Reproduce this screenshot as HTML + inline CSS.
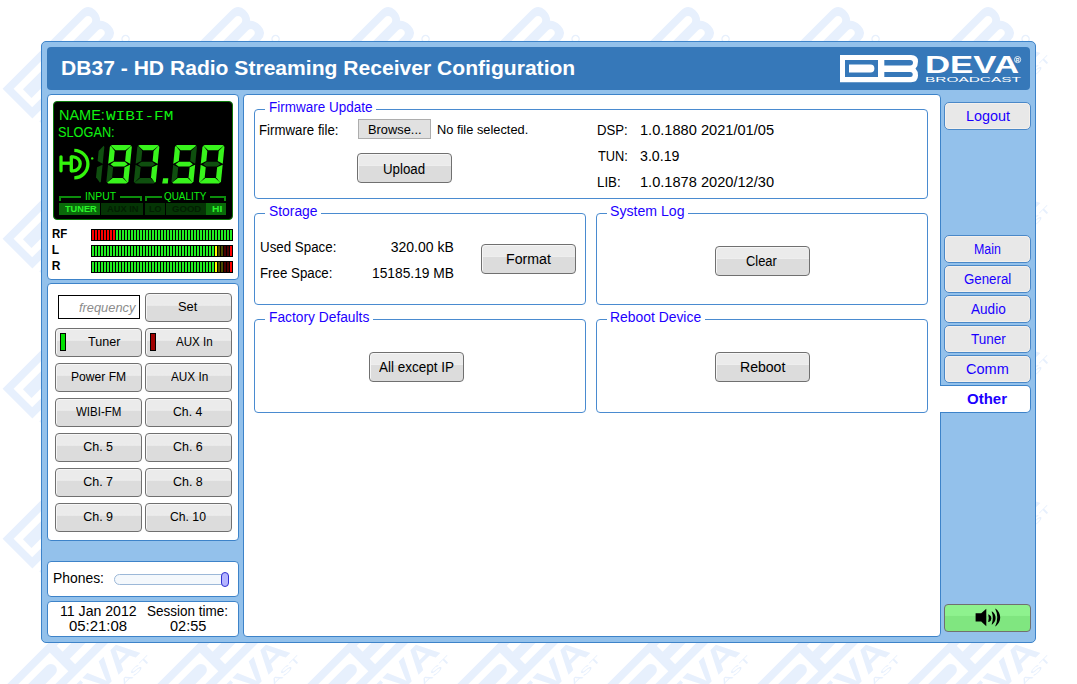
<!DOCTYPE html>
<html><head><meta charset="utf-8"><style>
html,body{margin:0;padding:0;width:1077px;height:684px;overflow:hidden;background:#fff;}
.b{position:absolute;box-sizing:border-box;}
.t{position:absolute;white-space:nowrap;}
.ov{position:absolute;left:0;top:0;}
.outer{background:#93c1eb;border:1px solid #3d83c9;border-radius:5px;}
.hdr{background:#3678b9;border-radius:4px;}
.pnl{background:#fff;border:1px solid #3d83c9;border-radius:4px;}
.nav{background:#e8e8e8;border:1px solid #4a88c8;border-radius:5px;box-shadow:inset 0 0 0 1px #f4f0ec;}
.tab{background:#fff;border:1px solid #3d83c9;border-left:none;border-radius:0 5px 5px 0;}
.sound{background:linear-gradient(#8ef28e 0,#8ef28e 40%,#80e680 44%,#80e680 100%);border:1px solid #707070;border-radius:4px;}
.lcd{background:#000;border:1px solid #0b7a0b;border-radius:4px;}
.fs{border:1px solid #4a8bd0;border-radius:4px;}
.wh{background:#fff;}
.btn{box-shadow:inset 1px 1px 0 #f6f6f6;background:linear-gradient(#ebebeb 0,#ebebeb 38%,#efefef 42%,#dcdcdc 44%,#dcdcdc 100%);border:1px solid #707070;border-radius:4px;}
.brw{background:#e1e1e1;border:1px solid #adadad;}
.inp{background:#fff;border:1px solid #000;}
.ind{border:1px solid #000;}
.trk{background:#f4f8fc;border:1px solid #9cb8d8;border-radius:6px;}
.thumb{background:#b4b4ff;border:1px solid #3030d0;border-radius:4px;}
.mtr{position:absolute;height:12px;background:#000;padding:1px 0 1px 1px;box-sizing:border-box;width:142px;display:flex;}
.mtr i{display:block;width:2px;height:10px;margin-right:1px;}
</style></head>
<body>
<svg width="1050" height="684" style="position:absolute;left:0;top:0"><defs><pattern id="wm" x="0" y="0" width="150" height="150" patternUnits="userSpaceOnUse"><g transform="translate(-150,-150)"><g transform="translate(2.6,88.7) rotate(-45) scale(1.55)"><path d="M0,0 H71 Q78,0 78,6.5 Q78,11 75.5,13.5 Q78,16 78,20.5 Q78,27.2 71,27.2 H0 Z" fill="#e7f0fd"/><rect x="5" y="5" width="33" height="17" fill="#ffffff"/><path d="M9,9.6 H30.5 A3.9,3.9 0 0 1 30.5,17.4 H9 Z" fill="#e7f0fd"/><path d="M44.3,5 H70.2 A2.75,2.75 0 0 1 70.2,10.5 H44.3 Z" fill="#ffffff"/><path d="M44.3,16.9 H70.2 A2.5,2.5 0 0 1 70.2,21.9 H44.3 Z" fill="#ffffff"/><text x="0" y="46.5" font-family="Liberation Sans" font-weight="bold" font-size="21.65" fill="#e7f0fd" textLength="80" lengthAdjust="spacingAndGlyphs">DEVA</text><text x="0.5" y="54.5" font-family="Liberation Sans" font-size="5.9" fill="#e7f0fd" textLength="81" lengthAdjust="spacingAndGlyphs">BROADCAST</text><circle cx="78.8" cy="33.4" r="2.3" fill="none" stroke="#e7f0fd" stroke-width="0.9"/></g></g><g transform="translate(-150,0)"><g transform="translate(2.6,88.7) rotate(-45) scale(1.55)"><path d="M0,0 H71 Q78,0 78,6.5 Q78,11 75.5,13.5 Q78,16 78,20.5 Q78,27.2 71,27.2 H0 Z" fill="#e7f0fd"/><rect x="5" y="5" width="33" height="17" fill="#ffffff"/><path d="M9,9.6 H30.5 A3.9,3.9 0 0 1 30.5,17.4 H9 Z" fill="#e7f0fd"/><path d="M44.3,5 H70.2 A2.75,2.75 0 0 1 70.2,10.5 H44.3 Z" fill="#ffffff"/><path d="M44.3,16.9 H70.2 A2.5,2.5 0 0 1 70.2,21.9 H44.3 Z" fill="#ffffff"/><text x="0" y="46.5" font-family="Liberation Sans" font-weight="bold" font-size="21.65" fill="#e7f0fd" textLength="80" lengthAdjust="spacingAndGlyphs">DEVA</text><text x="0.5" y="54.5" font-family="Liberation Sans" font-size="5.9" fill="#e7f0fd" textLength="81" lengthAdjust="spacingAndGlyphs">BROADCAST</text><circle cx="78.8" cy="33.4" r="2.3" fill="none" stroke="#e7f0fd" stroke-width="0.9"/></g></g><g transform="translate(-150,150)"><g transform="translate(2.6,88.7) rotate(-45) scale(1.55)"><path d="M0,0 H71 Q78,0 78,6.5 Q78,11 75.5,13.5 Q78,16 78,20.5 Q78,27.2 71,27.2 H0 Z" fill="#e7f0fd"/><rect x="5" y="5" width="33" height="17" fill="#ffffff"/><path d="M9,9.6 H30.5 A3.9,3.9 0 0 1 30.5,17.4 H9 Z" fill="#e7f0fd"/><path d="M44.3,5 H70.2 A2.75,2.75 0 0 1 70.2,10.5 H44.3 Z" fill="#ffffff"/><path d="M44.3,16.9 H70.2 A2.5,2.5 0 0 1 70.2,21.9 H44.3 Z" fill="#ffffff"/><text x="0" y="46.5" font-family="Liberation Sans" font-weight="bold" font-size="21.65" fill="#e7f0fd" textLength="80" lengthAdjust="spacingAndGlyphs">DEVA</text><text x="0.5" y="54.5" font-family="Liberation Sans" font-size="5.9" fill="#e7f0fd" textLength="81" lengthAdjust="spacingAndGlyphs">BROADCAST</text><circle cx="78.8" cy="33.4" r="2.3" fill="none" stroke="#e7f0fd" stroke-width="0.9"/></g></g><g transform="translate(0,-150)"><g transform="translate(2.6,88.7) rotate(-45) scale(1.55)"><path d="M0,0 H71 Q78,0 78,6.5 Q78,11 75.5,13.5 Q78,16 78,20.5 Q78,27.2 71,27.2 H0 Z" fill="#e7f0fd"/><rect x="5" y="5" width="33" height="17" fill="#ffffff"/><path d="M9,9.6 H30.5 A3.9,3.9 0 0 1 30.5,17.4 H9 Z" fill="#e7f0fd"/><path d="M44.3,5 H70.2 A2.75,2.75 0 0 1 70.2,10.5 H44.3 Z" fill="#ffffff"/><path d="M44.3,16.9 H70.2 A2.5,2.5 0 0 1 70.2,21.9 H44.3 Z" fill="#ffffff"/><text x="0" y="46.5" font-family="Liberation Sans" font-weight="bold" font-size="21.65" fill="#e7f0fd" textLength="80" lengthAdjust="spacingAndGlyphs">DEVA</text><text x="0.5" y="54.5" font-family="Liberation Sans" font-size="5.9" fill="#e7f0fd" textLength="81" lengthAdjust="spacingAndGlyphs">BROADCAST</text><circle cx="78.8" cy="33.4" r="2.3" fill="none" stroke="#e7f0fd" stroke-width="0.9"/></g></g><g transform="translate(0,0)"><g transform="translate(2.6,88.7) rotate(-45) scale(1.55)"><path d="M0,0 H71 Q78,0 78,6.5 Q78,11 75.5,13.5 Q78,16 78,20.5 Q78,27.2 71,27.2 H0 Z" fill="#e7f0fd"/><rect x="5" y="5" width="33" height="17" fill="#ffffff"/><path d="M9,9.6 H30.5 A3.9,3.9 0 0 1 30.5,17.4 H9 Z" fill="#e7f0fd"/><path d="M44.3,5 H70.2 A2.75,2.75 0 0 1 70.2,10.5 H44.3 Z" fill="#ffffff"/><path d="M44.3,16.9 H70.2 A2.5,2.5 0 0 1 70.2,21.9 H44.3 Z" fill="#ffffff"/><text x="0" y="46.5" font-family="Liberation Sans" font-weight="bold" font-size="21.65" fill="#e7f0fd" textLength="80" lengthAdjust="spacingAndGlyphs">DEVA</text><text x="0.5" y="54.5" font-family="Liberation Sans" font-size="5.9" fill="#e7f0fd" textLength="81" lengthAdjust="spacingAndGlyphs">BROADCAST</text><circle cx="78.8" cy="33.4" r="2.3" fill="none" stroke="#e7f0fd" stroke-width="0.9"/></g></g><g transform="translate(0,150)"><g transform="translate(2.6,88.7) rotate(-45) scale(1.55)"><path d="M0,0 H71 Q78,0 78,6.5 Q78,11 75.5,13.5 Q78,16 78,20.5 Q78,27.2 71,27.2 H0 Z" fill="#e7f0fd"/><rect x="5" y="5" width="33" height="17" fill="#ffffff"/><path d="M9,9.6 H30.5 A3.9,3.9 0 0 1 30.5,17.4 H9 Z" fill="#e7f0fd"/><path d="M44.3,5 H70.2 A2.75,2.75 0 0 1 70.2,10.5 H44.3 Z" fill="#ffffff"/><path d="M44.3,16.9 H70.2 A2.5,2.5 0 0 1 70.2,21.9 H44.3 Z" fill="#ffffff"/><text x="0" y="46.5" font-family="Liberation Sans" font-weight="bold" font-size="21.65" fill="#e7f0fd" textLength="80" lengthAdjust="spacingAndGlyphs">DEVA</text><text x="0.5" y="54.5" font-family="Liberation Sans" font-size="5.9" fill="#e7f0fd" textLength="81" lengthAdjust="spacingAndGlyphs">BROADCAST</text><circle cx="78.8" cy="33.4" r="2.3" fill="none" stroke="#e7f0fd" stroke-width="0.9"/></g></g><g transform="translate(150,-150)"><g transform="translate(2.6,88.7) rotate(-45) scale(1.55)"><path d="M0,0 H71 Q78,0 78,6.5 Q78,11 75.5,13.5 Q78,16 78,20.5 Q78,27.2 71,27.2 H0 Z" fill="#e7f0fd"/><rect x="5" y="5" width="33" height="17" fill="#ffffff"/><path d="M9,9.6 H30.5 A3.9,3.9 0 0 1 30.5,17.4 H9 Z" fill="#e7f0fd"/><path d="M44.3,5 H70.2 A2.75,2.75 0 0 1 70.2,10.5 H44.3 Z" fill="#ffffff"/><path d="M44.3,16.9 H70.2 A2.5,2.5 0 0 1 70.2,21.9 H44.3 Z" fill="#ffffff"/><text x="0" y="46.5" font-family="Liberation Sans" font-weight="bold" font-size="21.65" fill="#e7f0fd" textLength="80" lengthAdjust="spacingAndGlyphs">DEVA</text><text x="0.5" y="54.5" font-family="Liberation Sans" font-size="5.9" fill="#e7f0fd" textLength="81" lengthAdjust="spacingAndGlyphs">BROADCAST</text><circle cx="78.8" cy="33.4" r="2.3" fill="none" stroke="#e7f0fd" stroke-width="0.9"/></g></g><g transform="translate(150,0)"><g transform="translate(2.6,88.7) rotate(-45) scale(1.55)"><path d="M0,0 H71 Q78,0 78,6.5 Q78,11 75.5,13.5 Q78,16 78,20.5 Q78,27.2 71,27.2 H0 Z" fill="#e7f0fd"/><rect x="5" y="5" width="33" height="17" fill="#ffffff"/><path d="M9,9.6 H30.5 A3.9,3.9 0 0 1 30.5,17.4 H9 Z" fill="#e7f0fd"/><path d="M44.3,5 H70.2 A2.75,2.75 0 0 1 70.2,10.5 H44.3 Z" fill="#ffffff"/><path d="M44.3,16.9 H70.2 A2.5,2.5 0 0 1 70.2,21.9 H44.3 Z" fill="#ffffff"/><text x="0" y="46.5" font-family="Liberation Sans" font-weight="bold" font-size="21.65" fill="#e7f0fd" textLength="80" lengthAdjust="spacingAndGlyphs">DEVA</text><text x="0.5" y="54.5" font-family="Liberation Sans" font-size="5.9" fill="#e7f0fd" textLength="81" lengthAdjust="spacingAndGlyphs">BROADCAST</text><circle cx="78.8" cy="33.4" r="2.3" fill="none" stroke="#e7f0fd" stroke-width="0.9"/></g></g><g transform="translate(150,150)"><g transform="translate(2.6,88.7) rotate(-45) scale(1.55)"><path d="M0,0 H71 Q78,0 78,6.5 Q78,11 75.5,13.5 Q78,16 78,20.5 Q78,27.2 71,27.2 H0 Z" fill="#e7f0fd"/><rect x="5" y="5" width="33" height="17" fill="#ffffff"/><path d="M9,9.6 H30.5 A3.9,3.9 0 0 1 30.5,17.4 H9 Z" fill="#e7f0fd"/><path d="M44.3,5 H70.2 A2.75,2.75 0 0 1 70.2,10.5 H44.3 Z" fill="#ffffff"/><path d="M44.3,16.9 H70.2 A2.5,2.5 0 0 1 70.2,21.9 H44.3 Z" fill="#ffffff"/><text x="0" y="46.5" font-family="Liberation Sans" font-weight="bold" font-size="21.65" fill="#e7f0fd" textLength="80" lengthAdjust="spacingAndGlyphs">DEVA</text><text x="0.5" y="54.5" font-family="Liberation Sans" font-size="5.9" fill="#e7f0fd" textLength="81" lengthAdjust="spacingAndGlyphs">BROADCAST</text><circle cx="78.8" cy="33.4" r="2.3" fill="none" stroke="#e7f0fd" stroke-width="0.9"/></g></g></pattern></defs><rect width="1050" height="684" fill="url(#wm)"/></svg>
<div class="b outer" style="left:41px;top:41px;width:995px;height:602px;"></div><div class="b hdr" style="left:47px;top:47px;width:983px;height:43px;"></div><div class="b pnl" style="left:47px;top:94px;width:192px;height:186px;"></div><div class="b pnl" style="left:47px;top:283px;width:192px;height:258px;"></div><div class="b pnl" style="left:47px;top:561px;width:192px;height:36px;"></div><div class="b pnl" style="left:47px;top:601px;width:192px;height:36px;"></div><div class="b pnl content" style="left:243px;top:94px;width:698px;height:543px;"></div><div class="b nav" style="left:944px;top:102px;width:87px;height:28px;"></div><div class="b nav" style="left:944px;top:235px;width:87px;height:28px;"></div><div class="b nav" style="left:944px;top:265px;width:87px;height:28px;"></div><div class="b nav" style="left:944px;top:295px;width:87px;height:28px;"></div><div class="b nav" style="left:944px;top:325px;width:87px;height:28px;"></div><div class="b nav" style="left:944px;top:355px;width:87px;height:28px;"></div><div class="b tab" style="left:940px;top:385px;width:91px;height:28px;"></div><div class="b sound" style="left:944px;top:604px;width:87px;height:28px;"></div><div class="b lcd" style="left:53px;top:101px;width:180px;height:119px;"></div><div class="b fs" style="left:254px;top:109px;width:674px;height:90px;"></div><div class="b fs" style="left:254px;top:213px;width:332px;height:92px;"></div><div class="b fs" style="left:596px;top:213px;width:332px;height:92px;"></div><div class="b fs" style="left:254px;top:319px;width:332px;height:94px;"></div><div class="b fs" style="left:596px;top:319px;width:332px;height:94px;"></div><div class="b wh" style="left:265px;top:105px;width:111px;height:8px;"></div><div class="b wh" style="left:265px;top:209px;width:56px;height:8px;"></div><div class="b wh" style="left:607px;top:209px;width:81px;height:8px;"></div><div class="b wh" style="left:265px;top:315px;width:108px;height:8px;"></div><div class="b wh" style="left:607px;top:315px;width:98px;height:8px;"></div><div class="b btn" style="left:145px;top:293px;width:87px;height:29px;"></div><div class="b btn" style="left:55px;top:328px;width:87px;height:29px;"></div><div class="b btn" style="left:145px;top:328px;width:87px;height:29px;"></div><div class="b btn" style="left:55px;top:363px;width:87px;height:29px;"></div><div class="b btn" style="left:145px;top:363px;width:87px;height:29px;"></div><div class="b btn" style="left:55px;top:398px;width:87px;height:29px;"></div><div class="b btn" style="left:145px;top:398px;width:87px;height:29px;"></div><div class="b btn" style="left:55px;top:433px;width:87px;height:29px;"></div><div class="b btn" style="left:145px;top:433px;width:87px;height:29px;"></div><div class="b btn" style="left:55px;top:468px;width:87px;height:29px;"></div><div class="b btn" style="left:145px;top:468px;width:87px;height:29px;"></div><div class="b btn" style="left:55px;top:503px;width:87px;height:29px;"></div><div class="b btn" style="left:145px;top:503px;width:87px;height:29px;"></div><div class="b inp" style="left:58px;top:295px;width:82px;height:24px;"></div><div class="b ind" style="left:60px;top:333px;width:6px;height:18px;background:#00e000;"></div><div class="b ind" style="left:150px;top:333px;width:6px;height:18px;background:#a00000;"></div><div class="b btn" style="left:357px;top:153px;width:95px;height:30px;"></div><div class="b brw" style="left:358px;top:119px;width:73px;height:20px;"></div><div class="b btn" style="left:481px;top:244px;width:95px;height:30px;"></div><div class="b btn" style="left:715px;top:246px;width:95px;height:30px;"></div><div class="b btn" style="left:369px;top:352px;width:95px;height:30px;"></div><div class="b btn" style="left:715px;top:352px;width:95px;height:30px;"></div><div class="b trk" style="left:114px;top:574px;width:115px;height:11px;"></div><div class="b thumb" style="left:221px;top:572px;width:8px;height:15px;"></div><div class="mtr" style="left:91px;top:229px;"><i style="background:#ff0000"></i><i style="background:#ff0000"></i><i style="background:#ff0000"></i><i style="background:#ff0000"></i><i style="background:#ff0000"></i><i style="background:#ff0000"></i><i style="background:#ff0000"></i><i style="background:#ff0000"></i><i style="background:#22ee22"></i><i style="background:#22ee22"></i><i style="background:#22ee22"></i><i style="background:#22ee22"></i><i style="background:#22ee22"></i><i style="background:#22ee22"></i><i style="background:#22ee22"></i><i style="background:#22ee22"></i><i style="background:#22ee22"></i><i style="background:#22ee22"></i><i style="background:#22ee22"></i><i style="background:#22ee22"></i><i style="background:#22ee22"></i><i style="background:#22ee22"></i><i style="background:#22ee22"></i><i style="background:#22ee22"></i><i style="background:#22ee22"></i><i style="background:#22ee22"></i><i style="background:#22ee22"></i><i style="background:#22ee22"></i><i style="background:#22ee22"></i><i style="background:#22ee22"></i><i style="background:#22ee22"></i><i style="background:#22ee22"></i><i style="background:#22ee22"></i><i style="background:#22ee22"></i><i style="background:#22ee22"></i><i style="background:#22ee22"></i><i style="background:#22ee22"></i><i style="background:#22ee22"></i><i style="background:#22ee22"></i><i style="background:#22ee22"></i><i style="background:#22ee22"></i><i style="background:#22ee22"></i><i style="background:#22ee22"></i><i style="background:#22ee22"></i><i style="background:#22ee22"></i><i style="background:#22ee22"></i><i style="background:#22ee22"></i></div><div class="mtr" style="left:91px;top:245px;"><i style="background:#22ee22"></i><i style="background:#22ee22"></i><i style="background:#22ee22"></i><i style="background:#22ee22"></i><i style="background:#22ee22"></i><i style="background:#22ee22"></i><i style="background:#22ee22"></i><i style="background:#22ee22"></i><i style="background:#22ee22"></i><i style="background:#22ee22"></i><i style="background:#22ee22"></i><i style="background:#22ee22"></i><i style="background:#22ee22"></i><i style="background:#22ee22"></i><i style="background:#22ee22"></i><i style="background:#22ee22"></i><i style="background:#22ee22"></i><i style="background:#22ee22"></i><i style="background:#22ee22"></i><i style="background:#22ee22"></i><i style="background:#22ee22"></i><i style="background:#22ee22"></i><i style="background:#22ee22"></i><i style="background:#22ee22"></i><i style="background:#22ee22"></i><i style="background:#22ee22"></i><i style="background:#22ee22"></i><i style="background:#22ee22"></i><i style="background:#22ee22"></i><i style="background:#22ee22"></i><i style="background:#22ee22"></i><i style="background:#22ee22"></i><i style="background:#22ee22"></i><i style="background:#22ee22"></i><i style="background:#22ee22"></i><i style="background:#22ee22"></i><i style="background:#22ee22"></i><i style="background:#22ee22"></i><i style="background:#22ee22"></i><i style="background:#22ee22"></i><i style="background:#22ee22"></i><i style="background:#ffff00"></i><i style="background:#4a4a00"></i><i style="background:#4a4a00"></i><i style="background:#4a0000"></i><i style="background:#4a0000"></i><i style="background:#ff0000"></i></div><div class="mtr" style="left:91px;top:261px;"><i style="background:#22ee22"></i><i style="background:#22ee22"></i><i style="background:#22ee22"></i><i style="background:#22ee22"></i><i style="background:#22ee22"></i><i style="background:#22ee22"></i><i style="background:#22ee22"></i><i style="background:#22ee22"></i><i style="background:#22ee22"></i><i style="background:#22ee22"></i><i style="background:#22ee22"></i><i style="background:#22ee22"></i><i style="background:#22ee22"></i><i style="background:#22ee22"></i><i style="background:#22ee22"></i><i style="background:#22ee22"></i><i style="background:#22ee22"></i><i style="background:#22ee22"></i><i style="background:#22ee22"></i><i style="background:#22ee22"></i><i style="background:#22ee22"></i><i style="background:#22ee22"></i><i style="background:#22ee22"></i><i style="background:#22ee22"></i><i style="background:#22ee22"></i><i style="background:#22ee22"></i><i style="background:#22ee22"></i><i style="background:#22ee22"></i><i style="background:#22ee22"></i><i style="background:#22ee22"></i><i style="background:#22ee22"></i><i style="background:#22ee22"></i><i style="background:#22ee22"></i><i style="background:#22ee22"></i><i style="background:#22ee22"></i><i style="background:#22ee22"></i><i style="background:#22ee22"></i><i style="background:#22ee22"></i><i style="background:#22ee22"></i><i style="background:#22ee22"></i><i style="background:#22ee22"></i><i style="background:#ffff00"></i><i style="background:#4a4a00"></i><i style="background:#4a4a00"></i><i style="background:#4a0000"></i><i style="background:#4a0000"></i><i style="background:#ff0000"></i></div>
<svg class="ov" width="1077" height="684" viewBox="0 0 1077 684"><polygon points="104.34,147.05 103.69,145.75 98.64,151.05 97.63,161.10 102.67,163.75" fill="#0f4f0f"/><polygon points="102.58,164.65 97.01,167.30 96.01,177.35 100.00,182.65 100.91,181.35" fill="#0f4f0f"/><polygon points="112.09,145.00 129.99,145.00 131.21,145.78 125.46,150.30 115.56,150.30 110.71,145.78" fill="#38f41c"/><polygon points="108.25,183.40 126.15,183.40 127.53,182.62 122.68,178.10 112.78,178.10 107.03,182.62" fill="#38f41c"/><polygon points="109.84,147.05 110.75,145.75 114.73,151.05 113.73,161.10 108.17,163.75" fill="#38f41c"/><polygon points="108.08,164.65 113.11,167.30 112.11,177.35 107.06,182.65 106.41,181.35" fill="#0f4f0f"/><polygon points="131.83,147.05 131.19,145.75 126.14,151.05 125.13,161.10 130.16,163.75" fill="#38f41c"/><polygon points="130.07,164.65 124.51,167.30 123.51,177.35 127.50,182.65 128.41,181.35" fill="#38f41c"/><polygon points="110.47,164.20 113.95,161.85 124.75,161.85 127.77,164.20 124.28,166.55 113.48,166.55" fill="#38f41c"/><polygon points="139.59,145.00 157.49,145.00 158.71,145.78 152.96,150.30 143.06,150.30 138.21,145.78" fill="#38f41c"/><polygon points="135.75,183.40 153.65,183.40 155.03,182.62 150.18,178.10 140.28,178.10 134.53,182.62" fill="#0f4f0f"/><polygon points="137.33,147.05 138.24,145.75 142.24,151.05 141.23,161.10 135.66,163.75" fill="#0f4f0f"/><polygon points="135.57,164.65 140.61,167.30 139.60,177.35 134.55,182.65 133.91,181.35" fill="#0f4f0f"/><polygon points="159.33,147.05 158.68,145.75 153.63,151.05 152.63,161.10 157.66,163.75" fill="#38f41c"/><polygon points="157.57,164.65 152.01,167.30 151.00,177.35 154.99,182.65 155.91,181.35" fill="#38f41c"/><polygon points="137.97,164.20 141.45,161.85 152.25,161.85 155.27,164.20 151.78,166.55 140.98,166.55" fill="#0f4f0f"/><polygon points="177.19,145.00 195.09,145.00 196.31,145.78 190.56,150.30 180.66,150.30 175.81,145.78" fill="#38f41c"/><polygon points="173.35,183.40 191.25,183.40 192.63,182.62 187.78,178.10 177.88,178.10 172.13,182.62" fill="#38f41c"/><polygon points="174.94,147.05 175.84,145.75 179.84,151.05 178.83,161.10 173.27,163.75" fill="#38f41c"/><polygon points="173.18,164.65 178.21,167.30 177.21,177.35 172.16,182.65 171.51,181.35" fill="#0f4f0f"/><polygon points="196.94,147.05 196.28,145.75 191.24,151.05 190.23,161.10 195.27,163.75" fill="#0f4f0f"/><polygon points="195.18,164.65 189.61,167.30 188.60,177.35 192.59,182.65 193.51,181.35" fill="#38f41c"/><polygon points="175.57,164.20 179.06,161.85 189.86,161.85 192.87,164.20 189.39,166.55 178.59,166.55" fill="#38f41c"/><polygon points="204.69,145.00 222.59,145.00 223.81,145.78 218.06,150.30 208.16,150.30 203.31,145.78" fill="#38f41c"/><polygon points="200.85,183.40 218.75,183.40 220.13,182.62 215.28,178.10 205.38,178.10 199.63,182.62" fill="#38f41c"/><polygon points="202.44,147.05 203.34,145.75 207.34,151.05 206.33,161.10 200.77,163.75" fill="#38f41c"/><polygon points="200.68,164.65 205.71,167.30 204.71,177.35 199.66,182.65 199.01,181.35" fill="#38f41c"/><polygon points="224.44,147.05 223.78,145.75 218.74,151.05 217.73,161.10 222.77,163.75" fill="#38f41c"/><polygon points="222.68,164.65 217.11,167.30 216.10,177.35 220.09,182.65 221.01,181.35" fill="#38f41c"/><polygon points="203.07,164.20 206.56,161.85 217.36,161.85 220.37,164.20 216.89,166.55 206.09,166.55" fill="#0f4f0f"/><polygon points="163.10,178.2 168.30,178.2 167.8,183.4 162.2,183.4" fill="#38f41c"/><g fill="none" stroke="#33f50c" stroke-width="3.3" stroke-linecap="round"><line x1="61" y1="156.8" x2="61" y2="170.8"/><line x1="61" y1="163.2" x2="71.3" y2="163.2" stroke-linecap="butt"/><line x1="71.3" y1="156.8" x2="71.3" y2="170.8"/><path d="M71.3,156.8 H73.2 A7.0,7.0 0 0 1 73.2,170.8 H71.3" stroke-linecap="butt"/><path d="M74.3,150.4 A13.6,13.7 0 0 1 74.3,177.8" stroke-linecap="butt"/></g><circle cx="92.2" cy="158.4" r="1.2" fill="#33f50c"/><rect x="59" y="196" width="22" height="2" fill="#0c8c0c"/><rect x="59" y="196" width="2" height="5" fill="#0c8c0c"/><rect x="120" y="196" width="22" height="2" fill="#0c8c0c"/><rect x="140" y="196" width="2" height="5" fill="#0c8c0c"/><rect x="145" y="196" width="17" height="2" fill="#0c8c0c"/><rect x="145" y="196" width="2" height="5" fill="#0c8c0c"/><rect x="210" y="196" width="16" height="2" fill="#0c8c0c"/><rect x="224" y="196" width="2" height="5" fill="#0c8c0c"/><rect x="59" y="203" width="41" height="12" fill="#0a6a0a"/><rect x="101" y="203" width="42" height="12" fill="#053505"/><rect x="145" y="203" width="20" height="12" fill="#053505"/><rect x="166" y="203" width="40" height="12" fill="#053505"/><rect x="206" y="203" width="20" height="12" fill="#0a6a0a"/><path d="M840,55 H911 Q918,55 918,61.5 Q918,66 915.5,68.5 Q918,71 918,75.5 Q918,82.2 911,82.2 H840 Z" fill="#ffffff"/><rect x="845" y="60" width="33" height="17" fill="#3678b9"/><path d="M849,64.6 H870.5 A3.9,3.9 0 0 1 870.5,72.4 H849 Z" fill="#ffffff"/><path d="M884.3,60 H910.2 A2.75,2.75 0 0 1 910.2,65.5 H884.3 Z" fill="#3678b9"/><path d="M884.3,71.9 H910.2 A2.5,2.5 0 0 1 910.2,76.9 H884.3 Z" fill="#3678b9"/><text x="925" y="73.2" font-family="Liberation Sans" font-weight="bold" font-size="24.5" fill="#ffffff" textLength="94" lengthAdjust="spacingAndGlyphs">DEVA</text><text x="925" y="81.5" font-family="Liberation Sans" font-size="6.3" fill="#ffffff" textLength="96" lengthAdjust="spacingAndGlyphs">BROADCAST</text><circle cx="1017.6" cy="59.6" r="3.1" fill="none" stroke="#ffffff" stroke-width="0.8"/><text x="1017.6" y="61.6" font-family="Liberation Sans" font-weight="bold" font-size="5" fill="#ffffff" text-anchor="middle">R</text><polygon points="975.6,613.2 981.2,613.2 986.3,608.8 986.3,626.2 981.2,621.6 975.6,621.6" fill="#000"/><path d="M988.8,614.6 A3.93,3.93 0 0 1 988.8,622.0 L988.20,622.0 A11.71,11.71 0 0 0 988.20,614.6 Z" fill="#000"/><path d="M992.2,611.4 A7.91,7.91 0 0 1 992.2,624.4 L991.60,624.4 A18.20,18.20 0 0 0 991.60,611.4 Z" fill="#000"/><path d="M995.8,608.8 A10.80,10.80 0 0 1 995.8,626.2 L995.20,626.2 A19.92,19.92 0 0 0 995.20,608.8 Z" fill="#000"/></svg>
<div class="t" style="left:60.50px;top:57.22px;font-size:21px;line-height:21px;font-family:'Liberation Sans', sans-serif;color:#fff;font-weight:bold;transform:scaleX(1.0039);transform-origin:0 0;">DB37 - HD Radio Streaming Receiver Configuration</div>
<div class="t" style="left:58.67px;top:108.15px;font-size:14px;line-height:14px;font-family:'Liberation Sans', sans-serif;color:#10f010;transform:scaleX(1.0333);transform-origin:0 0;">NAME:</div>
<div class="t" style="left:105.50px;top:109.65px;font-size:13.5px;line-height:13.5px;font-family:'Liberation Mono', monospace;color:#10f010;transform:scaleX(1.1857);transform-origin:0 0;">WIBI-FM</div>
<div class="t" style="left:58.49px;top:125.15px;font-size:14px;line-height:14px;font-family:'Liberation Sans', sans-serif;color:#10f010;transform:scaleX(0.9100);transform-origin:0 0;">SLOGAN:</div>
<div class="t" style="left:84.56px;top:190.69px;font-size:11px;line-height:11px;font-family:'Liberation Sans', sans-serif;color:#10f010;transform:scaleX(0.9406);transform-origin:0 0;">INPUT</div>
<div class="t" style="left:163.80px;top:190.69px;font-size:11px;line-height:11px;font-family:'Liberation Sans', sans-serif;color:#10f010;transform:scaleX(0.9000);transform-origin:0 0;">QUALITY</div>
<div class="t" style="left:65.00px;top:203.96px;font-size:9.5px;line-height:9.5px;font-family:'Liberation Sans', sans-serif;color:#2af52a;font-weight:bold;transform:scaleX(0.9688);transform-origin:0 0;">TUNER</div>
<div class="t" style="left:107.20px;top:203.96px;font-size:9.5px;line-height:9.5px;font-family:'Liberation Sans', sans-serif;color:#021e02;font-weight:bold;transform:scaleX(0.9781);transform-origin:0 0;">AUX IN</div>
<div class="t" style="left:148.80px;top:203.96px;font-size:9.5px;line-height:9.5px;font-family:'Liberation Sans', sans-serif;color:#021e02;font-weight:bold;transform:scaleX(0.9385);transform-origin:0 0;">LO</div>
<div class="t" style="left:171.60px;top:203.96px;font-size:9.5px;line-height:9.5px;font-family:'Liberation Sans', sans-serif;color:#021e02;font-weight:bold;transform:scaleX(1.0069);transform-origin:0 0;">GOOD</div>
<div class="t" style="left:211.60px;top:203.96px;font-size:9.5px;line-height:9.5px;font-family:'Liberation Sans', sans-serif;color:#2af52a;font-weight:bold;transform:scaleX(1.0778);transform-origin:0 0;">HI</div>
<div class="t" style="left:51.75px;top:227.84px;font-size:12px;line-height:12px;font-family:'Liberation Sans', sans-serif;color:#000;font-weight:bold;transform:scaleX(0.9533);transform-origin:0 0;">RF</div>
<div class="t" style="left:51.70px;top:243.84px;font-size:12px;line-height:12px;font-family:'Liberation Sans', sans-serif;color:#000;font-weight:bold;">L</div>
<div class="t" style="left:51.70px;top:259.84px;font-size:12px;line-height:12px;font-family:'Liberation Sans', sans-serif;color:#000;font-weight:bold;">R</div>
<div class="t" style="left:78.70px;top:301.84px;font-size:12px;line-height:12px;font-family:'Liberation Sans', sans-serif;color:#8c8c8c;font-style:italic;transform:scaleX(1.0698);transform-origin:0 0;">frequency</div>
<div class="t" style="left:178.12px;top:301.42px;font-size:12.5px;line-height:12.5px;font-family:'Liberation Sans', sans-serif;color:#000;transform:scaleX(1.0278);transform-origin:0 0;">Set</div>
<div class="t" style="left:88.00px;top:336.42px;font-size:12.5px;line-height:12.5px;font-family:'Liberation Sans', sans-serif;color:#000;transform:scaleX(1.0063);transform-origin:0 0;">Tuner</div>
<div class="t" style="left:175.70px;top:336.42px;font-size:12.5px;line-height:12.5px;font-family:'Liberation Sans', sans-serif;color:#000;transform:scaleX(0.9282);transform-origin:0 0;">AUX In</div>
<div class="t" style="left:71.23px;top:371.42px;font-size:12.5px;line-height:12.5px;font-family:'Liberation Sans', sans-serif;color:#000;transform:scaleX(0.9673);transform-origin:0 0;">Power FM</div>
<div class="t" style="left:170.60px;top:371.42px;font-size:12.5px;line-height:12.5px;font-family:'Liberation Sans', sans-serif;color:#000;transform:scaleX(0.9410);transform-origin:0 0;">AUX In</div>
<div class="t" style="left:76.40px;top:406.42px;font-size:12.5px;line-height:12.5px;font-family:'Liberation Sans', sans-serif;color:#000;transform:scaleX(0.9204);transform-origin:0 0;">WIBI-FM</div>
<div class="t" style="left:173.02px;top:406.42px;font-size:12.5px;line-height:12.5px;font-family:'Liberation Sans', sans-serif;color:#000;transform:scaleX(0.9793);transform-origin:0 0;">Ch. 4</div>
<div class="t" style="left:83.20px;top:441.42px;font-size:12.5px;line-height:12.5px;font-family:'Liberation Sans', sans-serif;color:#000;">Ch. 5</div>
<div class="t" style="left:173.05px;top:441.42px;font-size:12.5px;line-height:12.5px;font-family:'Liberation Sans', sans-serif;color:#000;transform:scaleX(0.9966);transform-origin:0 0;">Ch. 6</div>
<div class="t" style="left:83.20px;top:476.42px;font-size:12.5px;line-height:12.5px;font-family:'Liberation Sans', sans-serif;color:#000;">Ch. 7</div>
<div class="t" style="left:173.05px;top:476.42px;font-size:12.5px;line-height:12.5px;font-family:'Liberation Sans', sans-serif;color:#000;transform:scaleX(0.9966);transform-origin:0 0;">Ch. 8</div>
<div class="t" style="left:83.20px;top:511.42px;font-size:12.5px;line-height:12.5px;font-family:'Liberation Sans', sans-serif;color:#000;">Ch. 9</div>
<div class="t" style="left:170.28px;top:511.42px;font-size:12.5px;line-height:12.5px;font-family:'Liberation Sans', sans-serif;color:#000;transform:scaleX(0.9750);transform-origin:0 0;">Ch. 10</div>
<div class="t" style="left:53.31px;top:571.15px;font-size:14px;line-height:14px;font-family:'Liberation Sans', sans-serif;color:#000;transform:scaleX(0.9918);transform-origin:0 0;">Phones:</div>
<div class="t" style="left:59.79px;top:604.15px;font-size:14px;line-height:14px;font-family:'Liberation Sans', sans-serif;color:#000;transform:scaleX(1.0080);transform-origin:0 0;">11 Jan 2012</div>
<div class="t" style="left:69.10px;top:619.15px;font-size:14px;line-height:14px;font-family:'Liberation Sans', sans-serif;color:#000;transform:scaleX(1.0667);transform-origin:0 0;">05:21:08</div>
<div class="t" style="left:147.04px;top:604.15px;font-size:14px;line-height:14px;font-family:'Liberation Sans', sans-serif;color:#000;transform:scaleX(0.9634);transform-origin:0 0;">Session time:</div>
<div class="t" style="left:170.30px;top:619.15px;font-size:14px;line-height:14px;font-family:'Liberation Sans', sans-serif;color:#000;transform:scaleX(1.0371);transform-origin:0 0;">02:55</div>
<div class="t" style="left:268.84px;top:100.15px;font-size:14px;line-height:14px;font-family:'Liberation Sans', sans-serif;color:#1e00ff;transform:scaleX(0.9632);transform-origin:0 0;">Firmware Update</div>
<div class="t" style="left:268.61px;top:204.15px;font-size:14px;line-height:14px;font-family:'Liberation Sans', sans-serif;color:#1e00ff;transform:scaleX(0.9896);transform-origin:0 0;">Storage</div>
<div class="t" style="left:610.09px;top:204.15px;font-size:14px;line-height:14px;font-family:'Liberation Sans', sans-serif;color:#1e00ff;transform:scaleX(1.0083);transform-origin:0 0;">System Log</div>
<div class="t" style="left:268.62px;top:310.15px;font-size:14px;line-height:14px;font-family:'Liberation Sans', sans-serif;color:#1e00ff;transform:scaleX(0.9842);transform-origin:0 0;">Factory Defaults</div>
<div class="t" style="left:610.11px;top:310.15px;font-size:14px;line-height:14px;font-family:'Liberation Sans', sans-serif;color:#1e00ff;transform:scaleX(0.9922);transform-origin:0 0;">Reboot Device</div>
<div class="t" style="left:259.45px;top:123.15px;font-size:14px;line-height:14px;font-family:'Liberation Sans', sans-serif;color:#000;transform:scaleX(0.9463);transform-origin:0 0;">Firmware file:</div>
<div class="t" style="left:367.98px;top:124.33px;font-size:12.6px;line-height:12.6px;font-family:'Liberation Sans', sans-serif;color:#000;transform:scaleX(1.0196);transform-origin:0 0;">Browse...</div>
<div class="t" style="left:437.18px;top:124.33px;font-size:12.6px;line-height:12.6px;font-family:'Liberation Sans', sans-serif;color:#000;transform:scaleX(1.0182);transform-origin:0 0;">No file selected.</div>
<div class="t" style="left:383.25px;top:162.15px;font-size:14px;line-height:14px;font-family:'Liberation Sans', sans-serif;color:#000;transform:scaleX(0.9488);transform-origin:0 0;">Upload</div>
<div class="t" style="left:596.86px;top:123.15px;font-size:14px;line-height:14px;font-family:'Liberation Sans', sans-serif;color:#000;transform:scaleX(0.9419);transform-origin:0 0;">DSP:</div>
<div class="t" style="left:597.80px;top:149.15px;font-size:14px;line-height:14px;font-family:'Liberation Sans', sans-serif;color:#000;transform:scaleX(0.9156);transform-origin:0 0;">TUN:</div>
<div class="t" style="left:596.85px;top:175.15px;font-size:14px;line-height:14px;font-family:'Liberation Sans', sans-serif;color:#000;transform:scaleX(0.9522);transform-origin:0 0;">LIB:</div>
<div class="t" style="left:639.96px;top:123.15px;font-size:14px;line-height:14px;font-family:'Liberation Sans', sans-serif;color:#000;transform:scaleX(1.0433);transform-origin:0 0;">1.0.1880 2021/01/05</div>
<div class="t" style="left:639.99px;top:149.15px;font-size:14px;line-height:14px;font-family:'Liberation Sans', sans-serif;color:#000;transform:scaleX(1.0132);transform-origin:0 0;">3.0.19</div>
<div class="t" style="left:639.96px;top:175.15px;font-size:14px;line-height:14px;font-family:'Liberation Sans', sans-serif;color:#000;transform:scaleX(1.0433);transform-origin:0 0;">1.0.1878 2020/12/30</div>
<div class="t" style="left:259.55px;top:240.15px;font-size:14px;line-height:14px;font-family:'Liberation Sans', sans-serif;color:#000;transform:scaleX(0.9526);transform-origin:0 0;">Used Space:</div>
<div class="t" style="left:259.55px;top:266.15px;font-size:14px;line-height:14px;font-family:'Liberation Sans', sans-serif;color:#000;transform:scaleX(0.9500);transform-origin:0 0;">Free Space:</div>
<div class="t" style="left:390.70px;top:240.15px;font-size:14px;line-height:14px;font-family:'Liberation Sans', sans-serif;color:#000;">320.00 kB</div>
<div class="t" style="left:371.81px;top:266.15px;font-size:14px;line-height:14px;font-family:'Liberation Sans', sans-serif;color:#000;transform:scaleX(0.9854);transform-origin:0 0;">15185.19 MB</div>
<div class="t" style="left:506.29px;top:252.15px;font-size:14px;line-height:14px;font-family:'Liberation Sans', sans-serif;color:#000;transform:scaleX(1.0116);transform-origin:0 0;">Format</div>
<div class="t" style="left:746.48px;top:254.15px;font-size:14px;line-height:14px;font-family:'Liberation Sans', sans-serif;color:#000;transform:scaleX(0.9219);transform-origin:0 0;">Clear</div>
<div class="t" style="left:378.90px;top:360.15px;font-size:14px;line-height:14px;font-family:'Liberation Sans', sans-serif;color:#000;transform:scaleX(0.9623);transform-origin:0 0;">All except IP</div>
<div class="t" style="left:739.50px;top:360.15px;font-size:14px;line-height:14px;font-family:'Liberation Sans', sans-serif;color:#000;transform:scaleX(1.0045);transform-origin:0 0;">Reboot</div>
<div class="t" style="left:965.87px;top:109.15px;font-size:14px;line-height:14px;font-family:'Liberation Sans', sans-serif;color:#1a00ff;transform:scaleX(1.0286);transform-origin:0 0;">Logout</div>
<div class="t" style="left:973.91px;top:242.15px;font-size:14px;line-height:14px;font-family:'Liberation Sans', sans-serif;color:#1a00ff;transform:scaleX(0.8862);transform-origin:0 0;">Main</div>
<div class="t" style="left:964.15px;top:272.15px;font-size:14px;line-height:14px;font-family:'Liberation Sans', sans-serif;color:#1a00ff;transform:scaleX(0.9479);transform-origin:0 0;">General</div>
<div class="t" style="left:970.90px;top:302.15px;font-size:14px;line-height:14px;font-family:'Liberation Sans', sans-serif;color:#1a00ff;transform:scaleX(0.9686);transform-origin:0 0;">Audio</div>
<div class="t" style="left:970.90px;top:332.15px;font-size:14px;line-height:14px;font-family:'Liberation Sans', sans-serif;color:#1a00ff;transform:scaleX(0.9667);transform-origin:0 0;">Tuner</div>
<div class="t" style="left:966.26px;top:362.15px;font-size:14px;line-height:14px;font-family:'Liberation Sans', sans-serif;color:#1a00ff;transform:scaleX(1.0385);transform-origin:0 0;">Comm</div>
<div class="t" style="left:966.60px;top:392.15px;font-size:14px;line-height:14px;font-family:'Liberation Sans', sans-serif;color:#1a00ff;font-weight:bold;transform:scaleX(1.0703);transform-origin:0 0;">Other</div>
</body></html>
